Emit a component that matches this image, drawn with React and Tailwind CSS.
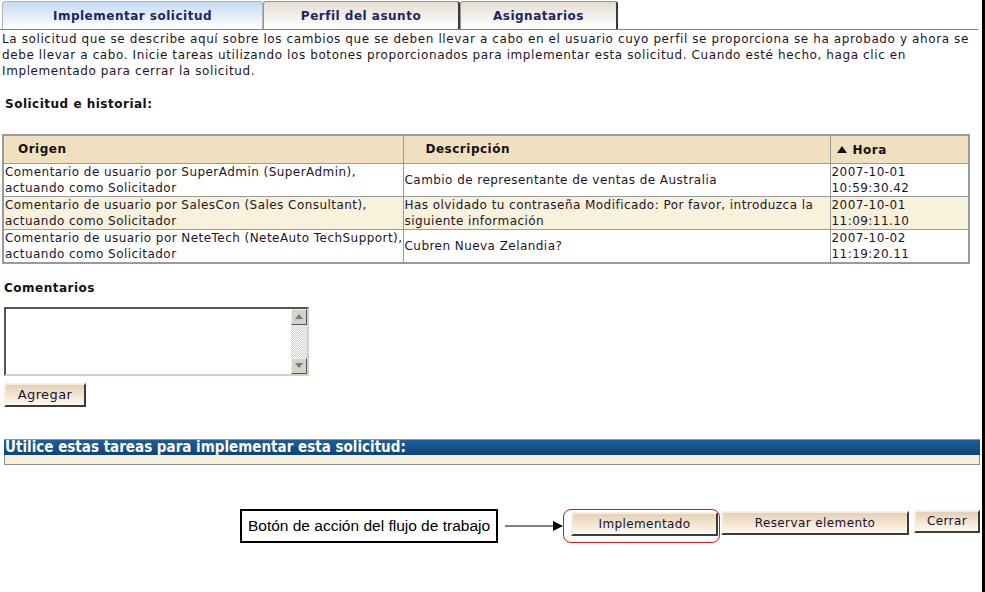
import React from 'react';

const rows = [
  {
    origin: ['Comentario de usuario por SuperAdmin (SuperAdmin),', 'actuando como Solicitador'],
    desc: ['Cambio de representante de ventas de Australia'],
    date: '2007-10-01',
    time: '10:59:30.42',
    alt: false,
  },
  {
    origin: ['Comentario de usuario por SalesCon (Sales Consultant),', 'actuando como Solicitador'],
    desc: ['Has olvidado tu contraseña Modificado: Por favor, introduzca la', 'siguiente información'],
    date: '2007-10-01',
    time: '11:09:11.10',
    alt: true,
  },
  {
    origin: ['Comentario de usuario por NeteTech (NeteAuto TechSupport),', 'actuando como Solicitador'],
    desc: ['Cubren Nueva Zelandia?'],
    date: '2007-10-02',
    time: '11:19:20.11',
    alt: false,
  },
];

const btn =
  'flex items-center justify-center border-2 border-t-[#f6efe2] border-l-[#f6efe2] border-b-[#3c3c3c] border-r-[#3c3c3c] bg-gradient-to-b from-[#e6d0b2] to-[#fffaf2] text-[12px] tracking-[0.4px] text-[#1a1030]';

const Tab = ({ label, active, w }) => (
  <div
    className={`flex h-[28px] items-center justify-center rounded-t-[3px] border border-b-0 ${
      active
        ? 'border-[#a9b4c4] bg-gradient-to-b from-[#c5dbf3] to-[#ffffff]'
        : 'border-[#9a978f] border-r-[#3a3a3a] border-r-2 bg-gradient-to-b from-[#e4ded3] to-[#ffffff]'
    } text-[12px] font-bold tracking-[0.5px] text-[#1c2566] ${w}`}
  >
    {label}
  </div>
);

const ScrollBtn = ({ up }) => (
  <div className="flex h-[16px] w-[16px] items-center justify-center border border-t-[#f2f0ea] border-l-[#f2f0ea] border-b-[#555] border-r-[#555] bg-[#d6d2ca]">
    <svg width="8" height="5" viewBox="0 0 8 5">
      {up ? <polygon points="4,0 8,5 0,5" fill="#7a7a7a" /> : <polygon points="0,0 8,0 4,5" fill="#7a7a7a" />}
    </svg>
  </div>
);

export default function App() {
  return (
    <div
      className="h-[592px] w-[985px] overflow-hidden border-r-[3px] border-black bg-white text-[12px] leading-[16px] tracking-[0.5px] text-[#1f1428]"
      style={{ fontFamily: '"DejaVu Sans", Verdana, sans-serif' }}
    >
      {/* Tabs */}
      <div className="flex h-[30px] w-[978px] items-end border-b border-[#7a7fa8] pl-[2px] pt-[2px]">
        <Tab label="Implementar solicitud" active w="w-[261px]" />
        <Tab label="Perfil del asunto" w="w-[197px]" />
        <Tab label="Asignatarios" w="w-[158px]" />
        <div className="flex-1" />
      </div>

      <p className="mt-[1px] w-[975px] pl-[2px] tracking-[0.6px]">
        La solicitud que se describe aquí sobre los cambios que se deben llevar a cabo en el usuario cuyo perfil se proporciona se ha aprobado y ahora se debe llevar a cabo. Inicie tareas utilizando los botones proporcionados para implementar esta solicitud. Cuando esté hecho, haga clic en Implementado para cerrar la solicitud.
      </p>

      <div className="mt-[17px] pl-[5px] font-bold text-[#111]">Solicitud e historial:</div>

      <table className="ml-[2px] mt-[22px] w-[966px] table-fixed border-collapse border-2 border-[#9a9a9a]">
        <colgroup>
          <col className="w-[400px]" />
          <col className="w-[427px]" />
          <col className="w-[139px]" />
        </colgroup>
        <thead>
          <tr className="h-[28px] bg-[#f1e0c0] text-left font-bold text-[#111]">
            <th className="border border-[#9a9a9a] pl-[14px]">Origen</th>
            <th className="border border-[#9a9a9a] pl-[22px]">Descripción</th>
            <th className="border border-[#9a9a9a] pl-[6px]">
              <span className="inline-flex items-center">
                <svg width="10" height="7" viewBox="0 0 10 7" className="mr-[6px]">
                  <polygon points="5,0 10,7 0,7" fill="#111" />
                </svg>
                Hora
              </span>
            </th>
          </tr>
        </thead>
        <tbody>
          {rows.map((r, i) => (
            <tr key={i} className={`h-[33px] tracking-[0.45px] ${r.alt ? 'bg-[#f8f1dc]' : 'bg-white'}`}>
              <td className="whitespace-nowrap border border-[#9a9a9a] px-[1px] align-middle">
                {r.origin[0]}
                <br />
                {r.origin[1]}
              </td>
              <td className="whitespace-nowrap border border-[#9a9a9a] px-[1px] align-middle">
                {r.desc.map((d, j) => (
                  <div key={j}>{d}</div>
                ))}
              </td>
              <td className="border border-[#9a9a9a] px-[1px] align-middle">
                {r.date}
                <br />
                {r.time}
              </td>
            </tr>
          ))}
        </tbody>
      </table>

      <div className="mt-[16px] pl-[4px] font-bold text-[#111]">Comentarios</div>

      {/* Comment box */}
      <div className="ml-[4px] mt-[11px] flex h-[69px] w-[305px] border-2 border-t-[#555] border-l-[#555] border-b-[#d4d0c8] border-r-[#d4d0c8] bg-white">
        <div className="flex-1" />
        <div className="flex w-[16px] flex-col">
          <ScrollBtn up />
          <div className="flex-1 bg-[repeating-conic-gradient(#cfcbc3_0%_25%,#ffffff_0%_50%)] bg-[length:2px_2px]" />
          <ScrollBtn />
        </div>
      </div>

      <div className="ml-[4px] mt-[7px] flex">
        <div className={`${btn} h-[24px] w-[82px] text-[13px]`}>Agregar</div>
      </div>

      {/* Tasks panel */}
      <div className="ml-[4px] mt-[32px] w-[976px]">
        <div className="flex h-[16px] items-center border-t border-[#6c9bd0] bg-gradient-to-b from-[#1e5e9c] to-[#0e4478] pl-[1px] text-white">
          <span className="origin-left scale-x-[0.9] text-[15px] font-bold leading-none tracking-normal whitespace-nowrap">
            Utilice estas tareas para implementar esta solicitud:
          </span>
        </div>
        <div className="h-[10px] border border-t-0 border-[#8f8f8f] bg-[#f7f0dc]" />
      </div>

      {/* Action row */}
      <div className="mt-[44px] flex items-start">
        <div
          className="ml-[240px] flex h-[34px] w-[258px] items-center justify-center border-2 border-black text-[15.5px] tracking-normal text-black"
          style={{ fontFamily: '"Liberation Sans", Arial, sans-serif' }}
        >
          Botón de acción del flujo de trabajo
        </div>
        <svg width="65" height="34" viewBox="0 0 65 34" className="shrink-0">
          <line x1="7" y1="17" x2="56" y2="17" stroke="#000" strokeWidth="1" />
          <polygon points="55,12 65,17 55,22" fill="#000" />
        </svg>
        <div className="flex h-[34px] w-[157px] items-start rounded-[8px] border border-[#e0101a] pl-[7px] pt-[2px]">
          <div className={`${btn} h-[24px] w-[147px]`}>Implementado</div>
        </div>
        <div className={`${btn} ml-[1px] mt-[2px] h-[24px] w-[188px]`}>Reservar elemento</div>
        <div className={`${btn} ml-[5px] mt-[1px] h-[23px] w-[66px]`}>Cerrar</div>
      </div>
    </div>
  );
}
